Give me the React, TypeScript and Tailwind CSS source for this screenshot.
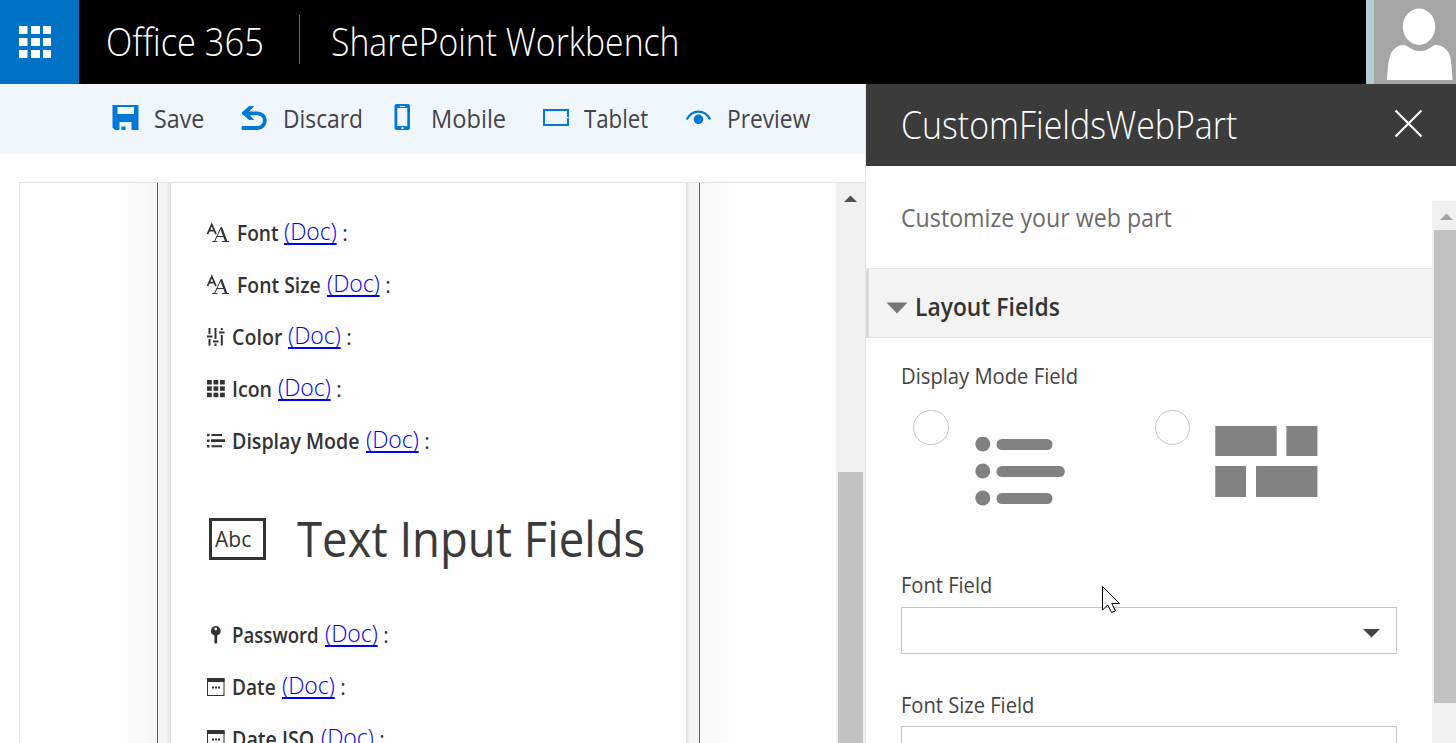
import React from "react";

function Waffle() {
  return (
    <svg width="32" height="32" viewBox="0 0 32 32" fill="#fff">
      {[0, 12, 24].map((y) =>
        [0, 12, 24].map((x) => <rect key={x + "-" + y} x={x} y={y} width={x === 12 ? 9 : 8.5} height="8" />)
      )}
    </svg>
  );
}

function SaveIcon() {
  return (
    <svg width="42" height="30" viewBox="0 0 42 30">
      <path fill="#0078d7" fillRule="evenodd" d="M.5 1h26v25H3.200L.5 23.500zM5.500 3v7H22V3zM7.500 18v8h2v-3.500h4V26h6v-8z" />
    </svg>
  );
}

function UndoIcon() {
  return (
    <svg width="42" height="30" viewBox="0 0 42 30" fill="none" stroke="#0078d7">
      <path strokeWidth="3.800" d="M.8 24h15.700a7.200 7.200 0 0 0 0-14.700H4" />
      <path fill="#0078d7" stroke="none" d="M8.200 2h5L7 9l6.200 7h-5L.8 9.800V8.500z" />
    </svg>
  );
}

function MobileIcon() {
  return (
    <svg width="42" height="30" viewBox="0 0 42 30">
      <rect x="5.500" y="0" width="15.500" height="26" rx="2" fill="#0078d7" />
      <rect x="8.300" y="4" width="10" height="18" fill="#eff6fd" />
      <rect x="10.800" y="2" width="5" height="1" fill="#eff6fd" />
      <rect x="12.500" y="23" width="2" height="2" fill="#eff6fd" />
    </svg>
  );
}

function TabletIcon() {
  return (
    <svg width="42" height="30" viewBox="0 0 42 30">
      <rect x="2" y="6" width="24" height="15" fill="none" stroke="#0078d7" strokeWidth="2" />
      <rect x="25" y="13" width="1.500" height="1.200" fill="#eff6fd" />
    </svg>
  );
}

function EyeIcon() {
  return (
    <svg width="42" height="30" viewBox="0 0 42 30">
      <path d="M1.800 15.500C7 5 20 5 25.200 15.500" fill="none" stroke="#0078d7" strokeWidth="2.300" />
      <circle cx="13.500" cy="15.300" r="4.800" fill="#0078d7" />
    </svg>
  );
}

function FontIcon() {
  return (
    <svg width="25" height="24" viewBox="0 0 25 24" fill="none" stroke="#333">
      <path strokeWidth="1.700" d="M1.500 13.200L5.800 3.300 10 13.200M3 9.700h5.500" />
      <path strokeWidth="1" d="M8.500 20.500L15 6.500M6.300 20.500h5M16 20.500h7M10.500 15.500h8" />
      <path strokeWidth="2.200" d="M15 6.500L20.300 20.500" />
    </svg>
  );
}

function SlidersIcon() {
  return (
    <svg width="20" height="24" viewBox="0 0 20 24" stroke="#333" strokeWidth="2" fill="none">
      <path d="M3.500 3v6M3.500 14v6.500M9.500 3v11M9.500 18.500v2.500M15.800 3v2M15.800 10v10.500" />
      <path d="M1 11.500h5.500M7 16.500h5.500M13 7.500h5.500" />
    </svg>
  );
}

function GridIcon() {
  return (
    <svg width="20" height="24" viewBox="0 0 20 24" fill="#333">
      {[3, 9.300, 15.700].map((y) => [1, 7.500, 14].map((x) => <rect key={x + "-" + y} x={x} y={y} width="4.800" height="4.500" />))}
    </svg>
  );
}

function ListIcon() {
  return (
    <svg width="20" height="24" viewBox="0 0 20 24" fill="#333">
      <path d="M1 4.800h2.500v2.400H1zM5.500 5H16v1.900H5.500zM1 10.500h2.500v2.400H1zM5 10.200h14v2.900H5zM1 16h2.500v2.400H1zM5.500 16.300H16v1.900H5.500z" />
    </svg>
  );
}

function KeyIcon() {
  return (
    <svg width="20" height="24" viewBox="0 0 20 24" fill="#333">
      <path fillRule="evenodd" d="M9.800 3a4.900 4.900 0 1 1 0 9.800 4.900 4.900 0 0 1 0-9.800zM9.800 4.500a1.400 1.400 0 1 0 0 2.800 1.400 1.400 0 0 0 0-2.800z" />
      <path d="M8.400 12h2.800v7.500L9.800 21l-1.400-1.500z" />
    </svg>
  );
}

function DateIcon() {
  return (
    <svg width="20" height="24" viewBox="0 0 20 24" fill="#333">
      <rect x="1.500" y="4" width="16.500" height="16.500" fill="none" stroke="#333" />
      <path d="M1 3h17.500v4H1zM6 11.500h2v2H6zM9 11.500h2v2H9zM12 11.500h2v2h-2z" />
    </svg>
  );
}

function Command({ icon, className = "", label, scale }: { icon: React.ReactNode; className?: string; label: string; scale: string }) {
  return (
    <div className={"flex shrink-0 items-center whitespace-nowrap " + className}>
      {icon}
      <span className={"inline-block origin-left " + scale}>{label}</span>
    </div>
  );
}

function Row({ icon, label, className }: { icon: React.ReactNode; label: string; className: string }) {
  return (
    <div className="flex h-[52px] shrink-0 items-center whitespace-nowrap pl-[35px] text-[21px] text-[#333]">
      <span className="flex shrink-0">{icon}</span>
      <span className={"ml-[6px] mt-px shrink-0 origin-left font-semibold " + className}>{label}</span>
      <a className="mb-[3px] ml-[6px] text-[23px] font-[350] tracking-[-0.1px] text-[#0000ee] underline decoration-2 underline-offset-[3px]">(Doc)</a>
      <span className="ml-[5.500px] mt-px">:</span>
    </div>
  );
}

export default function App() {
  return (
    <div className="flex h-[743px] w-[1456px] flex-col overflow-hidden bg-[#fefefe] font-['Open_Sans','Noto_Sans',sans-serif] text-[#333]">
      <header className="flex h-[84px] shrink-0 bg-black text-[38px] font-light text-white">
        <div className="flex w-[79px] items-center bg-[#0072c6] pl-[19px]"><Waffle /></div>
        <div className="flex w-[220px] items-center whitespace-nowrap pb-px pl-[27px]"><span className="inline-block origin-left scale-x-[0.905]">Office 365</span></div>
        <div className="mt-[15px] h-[49px] w-px bg-[#666]" />
        <div className="flex flex-1 items-center whitespace-nowrap pb-px pl-[31px]"><span className="inline-block origin-left scale-x-[0.887]">SharePoint Workbench</span></div>
        <div className="w-2 bg-[#b5cbd6]" />
        <svg className="bg-[#a5a5a5]" width="82" height="84" viewBox="0 0 82 84" fill="#fff">
          <ellipse cx="45" cy="26.700" rx="16.200" ry="18.200" />
          <path d="M13 80c.5-8 1-18 3-24 2-7 8-11 13-11 6 0 7 6 17 6s11-6 16-6c6 0 12 4 14 11 1.500 6 2 16 2.500 24z" />
        </svg>
      </header>
      <div className="flex min-h-0 flex-1">
        <main className="flex w-[865px] shrink-0 flex-col">
          <div className="flex h-[70px] shrink-0 items-center bg-[#eff6fd] pl-[112px] text-[25px] text-[#444]">
            <Command className="w-[129px]" icon={<SaveIcon />} label="Save" scale="scale-x-[0.93]" />
            <Command className="w-[147.5px]" icon={<UndoIcon />} label="Discard" scale="scale-x-[0.912]" />
            <Command className="w-[153.5px]" icon={<MobileIcon />} label="Mobile" scale="scale-x-[0.945]" />
            <Command className="w-[143px]" icon={<TabletIcon />} label="Tablet" scale="scale-x-[0.89]" />
            <Command icon={<EyeIcon />} label="Preview" scale="scale-x-[0.91]" />
          </div>
          <div className="ml-[19px] mt-[28px] flex min-h-0 flex-1 border-l border-t border-[#e1e1e1]">
            <div className="w-[97px]" />
            <div className="w-10 bg-linear-to-r from-[#fefefe] to-[#f6f6f6]" />
            <div className="w-px bg-[#0072c6]" />
            <div className="w-[13px] bg-linear-to-r from-[#f6f6f6] from-60% to-[#dcdcdc]" />
            <div className="flex h-[640px] w-[515px] flex-col bg-[#fefefe] pt-[24px]">
              <Row icon={<FontIcon />} label="Font" className="w-[41px] scale-x-[0.91]" />
              <Row icon={<FontIcon />} label="Font Size" className="w-[84px] scale-x-[0.923]" />
              <Row icon={<SlidersIcon />} label="Color" className="w-[50px] scale-x-[0.935]" />
              <Row icon={<GridIcon />} label="Icon" className="w-[40px] scale-x-[0.93]" />
              <Row icon={<ListIcon />} label="Display Mode" className="w-[128px] scale-x-[0.934]" />
              <div className="flex h-[142px] shrink-0 items-center whitespace-nowrap pl-[38px] pt-[2px]">
                <div className="flex h-[42px] w-[57px] items-center border-3 border-[#333] pl-[3px] pt-[2px] text-[21px] font-medium"><span>Abc</span></div>
                <h1 className="ml-[31px] origin-left scale-x-[0.928] pb-[3px] text-[49px] leading-[60px] text-[#3a3a3a]">Text Input Fields</h1>
              </div>
              <Row icon={<KeyIcon />} label="Password" className="w-[87px] scale-x-[0.888]" />
              <Row icon={<DateIcon />} label="Date" className="w-[44px] scale-x-[0.91]" />
              <Row icon={<DateIcon />} label="Date ISO" className="w-[83px] scale-x-[0.935]" />
            </div>
            <div className="w-[13px] bg-linear-to-r from-[#dcdcdc] to-[#f6f6f6] to-30%" />
            <div className="w-px bg-[#0072c6]" />
            <div className="w-10 bg-linear-to-r from-[#f9f9f9] to-[#fefefe]" />
            <div className="flex-1" />
            <div className="flex w-[29px] flex-col bg-[#f0f0f0] pl-[2px]">
              <svg width="25" height="289" viewBox="0 0 25 289"><path d="M6 19L12.500 12.500 19 19z" fill="#505050" /></svg>
              <div className="w-[25px] flex-1 bg-[#c1c1c1]" />
            </div>
          </div>
        </main>
        <aside className="flex min-w-0 flex-1 flex-col border-l border-[#e5e5e5]">
          <div className="flex h-[82px] shrink-0 items-center justify-between bg-[#3b3b3b] pl-[35px] pr-[33px] text-[38px] font-light text-white">
            <span className="mb-px inline-block origin-left scale-x-[0.892]">CustomFieldsWebPart</span>
            <svg className="mb-[3px] shrink-0" width="29" height="29" viewBox="0 0 29 29" stroke="#fff" strokeWidth="2.200"><path d="M1.500 1.500l26 26M27.500 1.500l-26 26" /></svg>
          </div>
          <div className="flex min-h-0 flex-1">
            <div className="flex min-w-0 flex-1 flex-col">
              <div className="flex h-[102px] shrink-0 items-center pl-[35px] pt-[2px] text-[25px] text-[#6c6c6c]"><span className="inline-block origin-left scale-x-[0.928]">Customize your web part</span></div>
              <div className="flex h-[70px] shrink-0 items-center border-y border-l-3 border-y-[#e5e5e5] border-l-[#dadada] bg-[#f3f3f3] pl-[17px] pt-[8px] text-[25px] font-semibold">
                <svg className="mt-[2px]" width="22" height="12" viewBox="0 0 22 12"><path d="M.5.500h21L11 11.500z" fill="#777" /></svg>
                <span className="ml-[7px] inline-block origin-left scale-x-[0.914]">Layout Fields</span>
              </div>
              <div className="flex h-[72px] shrink-0 items-center pl-[35px] pt-[6px] text-[21px] text-[#444]"><span className="inline-block origin-left scale-x-[0.962]">Display Mode Field</span></div>
              <div className="flex h-[150px] shrink-0 pl-[47px]">
                <div className="h-[35px] w-[36px] shrink-0 rounded-full border border-[#c6c6c6] bg-white" />
                <svg className="ml-[26px] mt-[27px]" width="92" height="70" viewBox="0 0 92 70" fill="#80827f">
                  <circle cx="7.800" cy="7" r="7.500" /><rect x="21.500" y="2" width="56" height="11" rx="5.500" />
                  <circle cx="7.800" cy="34" r="7.500" /><rect x="21.500" y="29" width="68.300" height="11" rx="5.500" />
                  <circle cx="7.800" cy="61" r="7.500" /><rect x="21.500" y="56" width="56" height="11" rx="5.500" />
                </svg>
                <div className="ml-[88px] h-[35px] w-[35px] shrink-0 rounded-full border border-[#c6c6c6] bg-white" />
                <svg className="ml-[25px] mt-[16px]" width="103" height="72" viewBox="0 0 103 72" fill="#80827f">
                  <path d="M.3 0h61.400v30H.3zM71.400 0h31v30h-31zM.3 40H31v31H.3zM41 40h61.400v31H41z" />
                </svg>
              </div>
              <div className="flex h-[47px] shrink-0 items-center pl-[35px] pt-[5px] text-[21px] text-[#444]"><span className="inline-block origin-left scale-x-[0.957]">Font Field</span></div>
              <div className="ml-[35px] flex h-[47px] w-[496px] shrink-0 items-center justify-end border border-[#c6c6c6] pr-[16px] pt-[5px]">
                <svg width="17" height="9" viewBox="0 0 17 9"><path d="M0 0h17L8.500 8.500z" fill="#444" /></svg>
              </div>
              <div className="flex h-[72px] shrink-0 items-end pb-[5px] pl-[35px] text-[21px] text-[#444]"><span className="inline-block origin-left scale-x-[0.957]">Font Size Field</span></div>
              <div className="ml-[35px] h-[47px] w-[496px] shrink-0 border border-[#c6c6c6]" />
            </div>
            <div className="mt-[35px] flex w-[24px] shrink-0 flex-col bg-[#f0f0f0]">
              <svg width="24" height="29" viewBox="0 0 24 29"><path d="M8 19L14.500 12.500 21 19z" fill="#a3a3a3" /></svg>
              <div className="ml-[2px] h-[473px] bg-[#c1c1c1]" />
            </div>
          </div>
        </aside>
      </div>
      <svg className="absolute left-[1102px] top-[585px]" width="19" height="30" viewBox="0 0 19 30" fill="#fff" stroke="#000" strokeWidth="1">
        <path d="M.5 1.500v23.500l5.300-5 3.800 7.500 3.900-1.600-3.700-7.400h7.700z" />
      </svg>
    </div>
  );
}
